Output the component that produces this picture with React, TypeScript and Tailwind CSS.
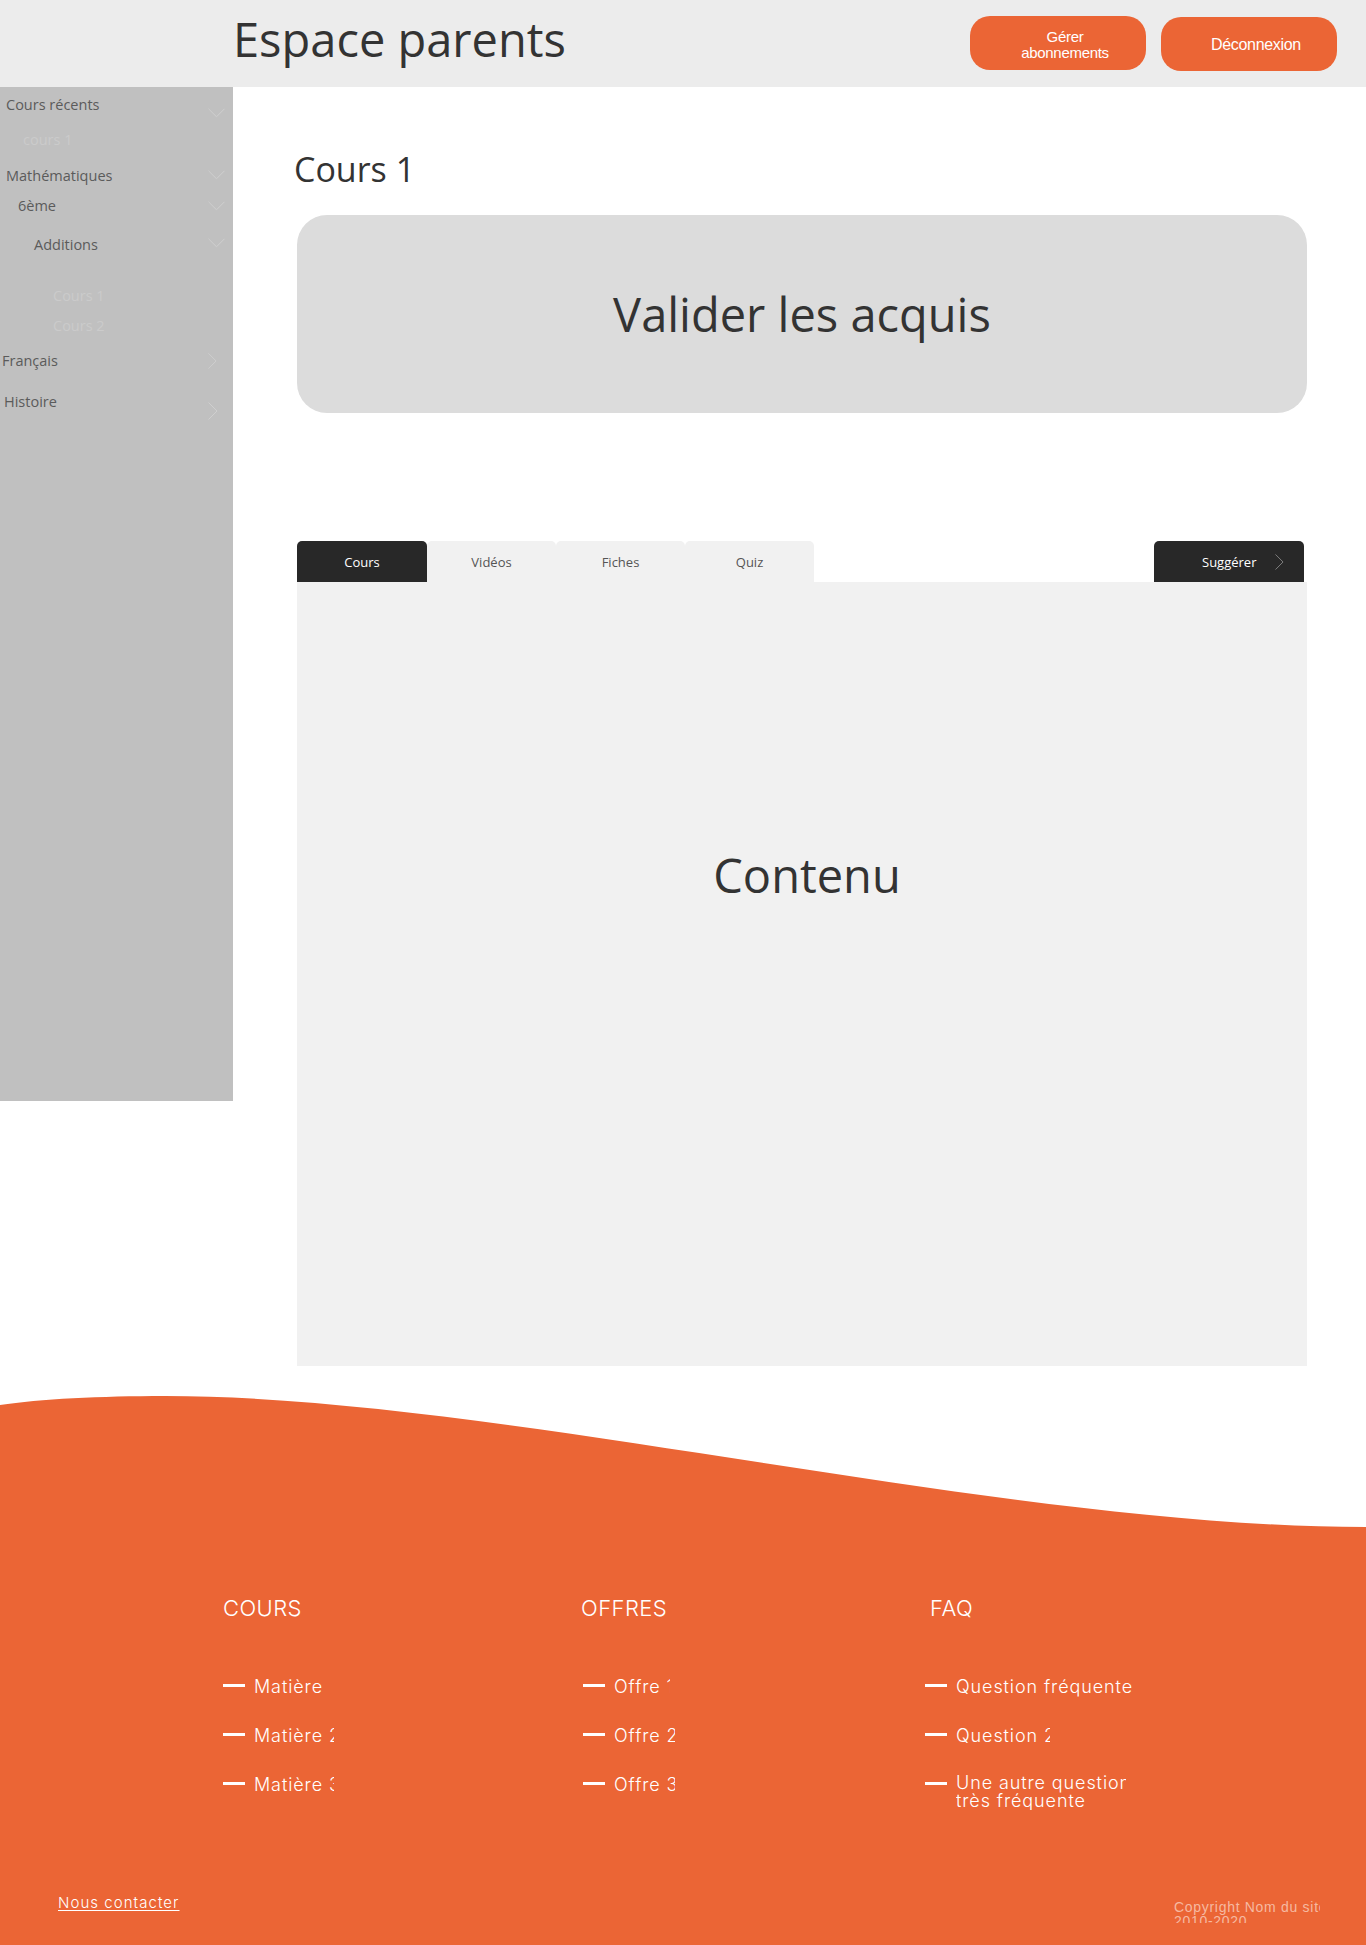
import React from "react";

function ChevronDown({ className }: { className: string }) {
  return (
    <svg viewBox="0 0 18 10" className={className} fill="none" stroke="#cfcfcf" strokeWidth="1">
      <path d="M0.5 0.5 L9 9 L17.5 0.5" />
    </svg>
  );
}

function ChevronRight({ className, color = "#cfcfcf" }: { className: string; color?: string }) {
  return (
    <svg viewBox="0 0 10 18" className={className} fill="none" stroke={color} strokeWidth="1">
      <path d="M0.5 0.5 L9 9 L0.5 17.5" />
    </svg>
  );
}

function FooterItem({ text, clip }: { text: React.ReactNode; clip: string }) {
  return (
    <div className="flex items-start gap-[9px]">
      <span className="mt-[8px] h-[3px] w-[22px] shrink-0 bg-white" />
      <span className={`overflow-hidden whitespace-nowrap text-[18px] leading-[22px] font-light tracking-[0.05em] ${clip}`}>
        {text}
      </span>
    </div>
  );
}

export default function App() {
  return (
    <div className="w-[1366px] min-h-[1945px] bg-white font-['Open_Sans',sans-serif] overflow-hidden">
      {/* Header */}
      <header className="flex h-[87px] items-start bg-[#ececec]">
        <h1 className="pl-[233px] pt-[7px] text-[47px] leading-[64px] font-normal text-[#333333]">Espace parents</h1>
        <div className="ml-auto flex gap-[15px] pr-[29px] pt-[16px] font-['Liberation_Sans',Arial,sans-serif] text-white">
          <button className="h-[54px] w-[176px] rounded-[20px] bg-[#eb6535] pl-[14px] pt-[3px] text-[15px] leading-[16px] tracking-[-0.02em]">
            Gérer
            <br />
            abonnements
          </button>
          <button className="mt-[1px] h-[54px] w-[176px] rounded-[20px] bg-[#eb6535] pl-[14px] pt-[2px] text-[16px] tracking-[-0.02em]">
            Déconnexion
          </button>
        </div>
      </header>

      {/* Body */}
      <div className="flex items-start">
        <aside className="flex h-[1014px] w-[233px] shrink-0 flex-col bg-[#c0c0c0] text-[14.5px] leading-[19px] text-[#5b5b5b]">
          <div className="mt-[8px] flex h-[19px] items-start pl-[6px] pr-[8px]">
            <span>Cours récents</span>
            <ChevronDown className="ml-auto mt-[13px] h-[10px] w-[17px] shrink-0" />
          </div>
          <div className="mt-[16px] flex h-[19px] items-start pl-[23px] text-[#cbcbcb]">
            <span>cours 1</span>
          </div>
          <div className="mt-[17px] flex h-[19px] items-start pl-[6px] pr-[8px]">
            <span>Mathématiques</span>
            <ChevronDown className="ml-auto mt-[4px] h-[10px] w-[17px] shrink-0" />
          </div>
          <div className="mt-[11px] flex h-[19px] items-start pl-[18px] pr-[8px]">
            <span>6ème</span>
            <ChevronDown className="ml-auto mt-[5px] h-[10px] w-[17px] shrink-0" />
          </div>
          <div className="mt-[20px] flex h-[19px] items-start pl-[34px] pr-[8px]">
            <span>Additions</span>
            <ChevronDown className="ml-auto mt-[3px] h-[10px] w-[17px] shrink-0" />
          </div>
          <div className="mt-[32px] flex h-[19px] items-start pl-[53px] text-[#cbcbcb]">
            <span>Cours 1</span>
          </div>
          <div className="mt-[11px] flex h-[19px] items-start pl-[53px] text-[#cbcbcb]">
            <span>Cours 2</span>
          </div>
          <div className="mt-[16px] flex h-[19px] items-start pl-[2px] pr-[16px]">
            <span>Français</span>
            <ChevronRight className="ml-auto mt-[1px] h-[18px] w-[9px] shrink-0" />
          </div>
          <div className="mt-[22px] flex h-[19px] items-start pl-[4px] pr-[15px]">
            <span>Histoire</span>
            <ChevronRight className="ml-auto mt-[10px] h-[18px] w-[10px] shrink-0" />
          </div>
        </aside>

        <main className="w-[1074px] pl-[64px] pt-[59px]">
          <h2 className="-ml-[3px] text-[34px] leading-[46px] font-normal text-[#333333]">Cours 1</h2>
          <div className="mt-[23px] flex h-[198px] items-center justify-center rounded-[30px] bg-[#dcdcdc] text-[47px] leading-[64px] text-[#333333]">
            Valider les acquis
          </div>

          <div className="mt-[128px] flex h-[41px] items-end text-[13px] leading-[18px]">
            <div className="flex h-[41px] w-[130px] items-center justify-center rounded-t-[5px] bg-[#282828] text-white">Cours</div>
            <div className="flex h-[41px] w-[129px] items-center justify-center rounded-t-[5px] bg-[#f1f1f1] text-[#555555]">Vidéos</div>
            <div className="flex h-[41px] w-[129px] items-center justify-center rounded-t-[5px] bg-[#f1f1f1] text-[#555555]">Fiches</div>
            <div className="flex h-[41px] w-[129px] items-center justify-center rounded-t-[5px] bg-[#f1f1f1] text-[#555555]">Quiz</div>
            <div className="ml-auto mr-[3px] flex h-[41px] w-[150px] items-center rounded-t-[5px] bg-[#282828] text-white">
              <span className="ml-[48px]">Suggérer</span>
              <ChevronRight className="ml-[19px] h-[16px] w-[9px]" color="#8a8a8a" />
            </div>
          </div>
          <div className="flex h-[784px] justify-center bg-[#f1f1f1] pt-[261px]">
            <p className="ml-[10px] text-[47px] leading-[64px] text-[#333333]">Contenu</p>
          </div>
        </main>
      </div>

      {/* Footer */}
      <footer className="mt-[26px]">
        <svg viewBox="0 0 1366 136" preserveAspectRatio="none" className="block h-[136px] w-[1366px]">
          <path d="M0 13 C40 7 100 4 165 4 C500 4 1000 135 1366 135 L1366 136 L0 136 Z" fill="#eb6535" />
        </svg>
        <div className="-mt-px flex h-[418px] flex-col bg-[#eb6535] font-['Inter',sans-serif] text-white">
          <div className="flex pl-[223px] pt-[68px]">
            <div className="w-[358px]">
              <h3 className="text-[22px] leading-[26px] font-light tracking-[0.02em]">COURS</h3>
              <div className="mt-[55px] flex flex-col gap-[27px]">
                <FooterItem text="Matière 1" clip="w-[72px]" />
                <FooterItem text="Matière 2" clip="w-[80px]" />
                <FooterItem text="Matière 3" clip="w-[80px]" />
              </div>
            </div>
            <div className="w-[344px]">
              <h3 className="text-[22px] leading-[26px] font-light tracking-[0.02em]">OFFRES</h3>
              <div className="mt-[55px] flex flex-col gap-[27px] pl-[2px]">
                <FooterItem text="Offre 1" clip="w-[56px]" />
                <FooterItem text="Offre 2" clip="w-[61px]" />
                <FooterItem text="Offre 3" clip="w-[61px]" />
              </div>
            </div>
            <div>
              <h3 className="ml-[5px] text-[22px] leading-[26px] font-light tracking-[0.02em]">FAQ</h3>
              <div className="mt-[55px] flex flex-col gap-[27px]">
                <FooterItem text="Question fréquente" clip="w-[200px]" />
                <FooterItem text="Question 2" clip="w-[94px]" />
                <div className="flex items-start gap-[9px]">
                  <span className="mt-[8px] h-[3px] w-[22px] shrink-0 bg-white" />
                  <span className="w-[170px] overflow-hidden whitespace-nowrap text-[18px] leading-[18px] font-light tracking-[0.05em]">
                    Une autre question
                    <br />
                    très fréquente
                  </span>
                </div>
              </div>
            </div>
          </div>

          <div className="mt-auto flex items-start pb-[22px] pl-[58px]">
            <a className="text-[15px] leading-[18px] font-light tracking-[0.07em] underline underline-offset-2">Nous contacter</a>
            <div className="ml-auto mr-[46px] mt-[6px] h-[23px] w-[146px] overflow-hidden whitespace-nowrap font-['Liberation_Sans',Arial,sans-serif] text-[14px] leading-[14px] tracking-[0.05em] text-[#f6b9a1]">
              Copyright Nom du site
              <br />
              2010-2020
            </div>
          </div>
        </div>
      </footer>
    </div>
  );
}
